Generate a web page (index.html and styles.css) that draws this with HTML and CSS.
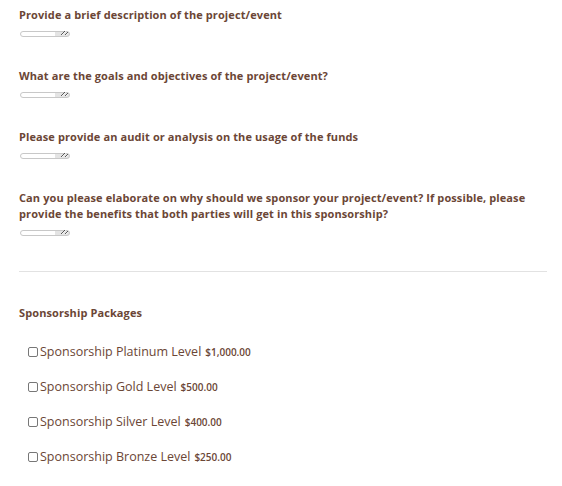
FILE: index.html
```html
<!DOCTYPE html>
<html>
<head>
<meta charset="utf-8">
<link rel="stylesheet" href="styles.css">
</head>
<body>
<form class="form">
  <div class="field">
    <label class="q">Provide a brief description of the project/event</label>
    <textarea class="ta"></textarea>
  </div>
  <div class="field">
    <label class="q">What are the goals and objectives of the project/event?</label>
    <textarea class="ta"></textarea>
  </div>
  <div class="field">
    <label class="q">Please provide an audit or analysis on the usage of the funds</label>
    <textarea class="ta"></textarea>
  </div>
  <div class="field">
    <label class="q">Can you please elaborate on why should we sponsor your project/event? If possible, please provide the benefits that both parties will get in this sponsorship?</label>
    <textarea class="ta"></textarea>
  </div>
  <hr class="sep">
  <div class="packages">
    <div class="q">Sponsorship Packages</div>
    <ul class="opts">
      <li class="opt"><input type="checkbox" class="cb"><span class="name">Sponsorship Platinum Level</span> <span class="price">$1,000.00</span></li>
      <li class="opt"><input type="checkbox" class="cb"><span class="name">Sponsorship Gold Level</span> <span class="price">$500.00</span></li>
      <li class="opt"><input type="checkbox" class="cb"><span class="name">Sponsorship Silver Level</span> <span class="price">$400.00</span></li>
      <li class="opt"><input type="checkbox" class="cb"><span class="name">Sponsorship Bronze Level</span> <span class="price">$250.00</span></li>
    </ul>
  </div>
</form>
</body>
</html>
```
FILE: styles.css
```css
html, body {
  margin: 0;
  padding: 0;
  background: #fff;
}
body {
  font-family: "Open Sans", "DejaVu Sans", sans-serif;
  color: #6b4636;
}
.form {
  padding: 7px 15px 0 19px;
}
.field {
  display: flex;
  flex-direction: column;
  align-items: flex-start;
  margin-bottom: 31px;
}
.q {
  font-size: 11px;
  font-weight: 700;
  line-height: 16px;
  letter-spacing: 0.1px;
  display: block;
}
.ta {
  margin: 8px 0 0 1px;
  width: 50px;
  height: 6px;
  padding: 0;
  box-sizing: border-box;
  border: 1px solid #c8c8c8;
  border-radius: 4px;
  resize: both;
  font-size: 1px;
  background: linear-gradient(to right, #fff 70%, #e4e4e4 70%);
}
.sep {
  border: 0;
  border-top: 1px solid #e2e2e2;
  margin: 35px 0 0 0;
}
.packages {
  padding-top: 33px;
}
.opts {
  list-style: none;
  margin: 13px 0 0 0;
  padding: 0 0 0 9px;
}
.opt {
  display: flex;
  align-items: center;
  height: 35px;
  font-size: 12.5px;
}
.cb {
  width: 10px;
  height: 10px;
  margin: 0 2px 0 0;
  appearance: none;
  border: 1px solid #777;
  border-radius: 2px;
  background: #fff;
}
.price {
  font-size: 10px;
  margin-left: 4px;
  font-weight: 600;
}
```
